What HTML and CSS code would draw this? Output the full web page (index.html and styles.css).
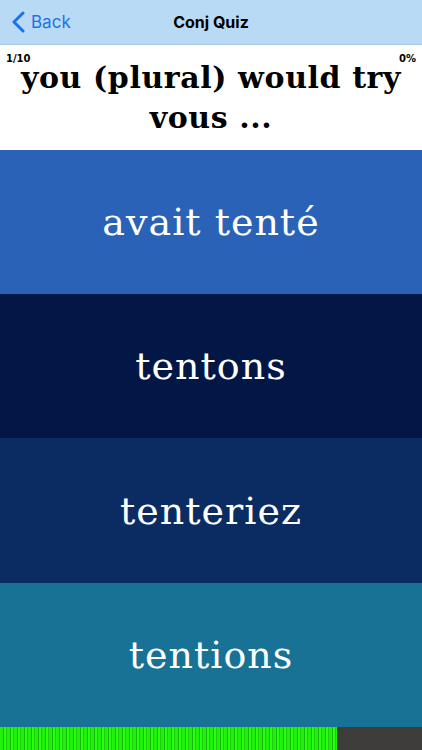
FILE: index.html
```html
<!DOCTYPE html>
<html>
<head>
<meta charset="utf-8">
<link rel="stylesheet" href="styles.css">
</head>
<body>
<div class="app">
  <header class="nav">
    <div class="back">
      <svg class="chev" width="13" height="22" viewBox="0 0 13 22"><path d="M11 2 L2 11 L11 20" fill="none" stroke="#1a73e8" stroke-width="3" stroke-linecap="round" stroke-linejoin="round"/></svg>
      <span>Back</span>
    </div>
    <div class="title">Conj Quiz</div>
  </header>
  <section class="question">
    <div class="meta"><span>1/10</span><span>0%</span></div>
    <div class="prompt">you (plural) would try<br>vous ...</div>
  </section>
  <div class="answer a1">avait tenté</div>
  <div class="answer a2">tentons</div>
  <div class="answer a3">tenteriez</div>
  <div class="answer a4">tentions</div>
  <div class="progress"><div class="fill" style="width:337px"></div></div>
</div>
</body>
</html>
```
FILE: styles.css
```css
html, body { margin: 0; padding: 0; }
body { width: 422px; height: 750px; overflow: hidden; background: #fff; }
.app { display: flex; flex-direction: column; height: 750px; }
.nav {
  height: 44px; border-bottom: 1px solid #a8c8e2; background: #b9daf5;
  display: flex; align-items: center; justify-content: center; position: relative;
  font-family: "Inter", "Liberation Sans", sans-serif;
}
.back { position: absolute; left: 12px; top: 0; height: 44px; display: flex; align-items: center; gap: 6px; color: #1a73e8; font-size: 17px; }
.title { font-weight: 700; font-size: 16px; color: #000; }
.question { height: 105px; display: flex; flex-direction: column; }
.meta {
  display: flex; justify-content: space-between; padding: 8px 6px 0 6px;
  font-family: "DejaVu Sans", sans-serif; font-weight: 700; font-size: 10px; line-height: 11px; color: #000; height: 11px;
}
.prompt {
  text-align: center; font-family: "DejaVu Serif", serif; font-weight: 700; font-size: 30px;
  line-height: 40px; margin-top: -6px; color: #000; letter-spacing: 0.6px;
}
.answer {
  height: 144px; display: flex; align-items: center; justify-content: center;
  color: #fff; font-family: "DejaVu Serif", serif; font-size: 38px; letter-spacing: 1px;
}
.a1 { background: #2a62b8; }
.a2 { background: #021745; }
.a3 { background: #0a2c63; height: 145px; }
.a4 { background: #177295; }
.progress { height: 23px; background: #3f3d3c; display: flex; }
.fill {
  height: 100%;
  background: repeating-linear-gradient(90deg, #22f00c 0 3px, #17b80c 3px 4px, #26ff10 4px 6px, #1ccf0c 6px 7px);
}
```
